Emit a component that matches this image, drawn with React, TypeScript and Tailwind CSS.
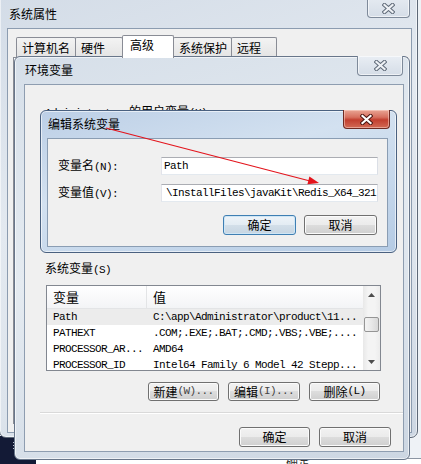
import React from "react";

const mono =
  "font-['Liberation_Mono','Noto_Sans_CJK_SC',monospace] text-[11px] tracking-[-0.6px]";
const btn =
  "flex items-center justify-center rounded-[3px] border border-[#707070] bg-[linear-gradient(#f2f2f2_0%,#ebebeb_49%,#dddddd_50%,#cfcfcf_100%)] shadow-[inset_0_0_0_1px_#fbfbfb] text-[12px] leading-none text-black";
const btnDefault =
  "flex items-center justify-center rounded-[3px] border border-[#3f7fb3] bg-[linear-gradient(#eef4f9_0%,#e3ecf3_49%,#d3dfe9_50%,#c6d5e2_100%)] shadow-[inset_0_0_0_1px_#cfe6f5] text-[12px] leading-none text-black";
const input =
  "bg-white border border-[#abadb3] border-l-[#e2e3ea] border-r-[#dbdfe6] border-b-[#e3e9ef] flex items-center overflow-hidden whitespace-nowrap";

function XGlyph({ red }: { red?: boolean }) {
  const d = "M2.5 2 L10.5 9 M10.5 2 L2.5 9";
  return (
    <svg width="13" height="11" viewBox="0 0 13 11">
      <path d={d} stroke={red ? "#4a1510" : "#5f6a78"} strokeWidth="4.2" strokeLinecap="square" />
      <path d={d} stroke={red ? "#ffffff" : "#eef1f5"} strokeWidth="2.2" strokeLinecap="square" />
    </svg>
  );
}

function Tab({ label, w, sel }: { label: string; w: number; sel?: boolean }) {
  if (sel) {
    return (
      <div
        style={{ width: w }}
        className="relative z-10 -ml-px mb-[-1px] h-[23px] bg-white border border-b-0 border-[#898c95] rounded-t-[2px] pl-[7px] pt-[1px] leading-[16px]"
      >
        {label}
      </div>
    );
  }
  return (
    <div
      style={{ width: w }}
      className="-ml-px first:ml-0 h-[20px] border border-b-0 border-[#898c95] rounded-t-[2px] bg-[linear-gradient(#f3f3f3,#e4e4e4)] pl-[5px] pt-[2px] leading-[16px]"
    >
      {label}
    </div>
  );
}

function OuterWindow() {
  return (
    <div className="absolute left-[-1px] top-[-8px] w-[419px] h-[446px] rounded-[7px] border border-[#5d6877] bg-[linear-gradient(160deg,#d3dce7_0%,#e3e9f0_40%,#dde4ec_70%,#cdd7e3_100%)] shadow-[inset_0_0_0_1px_rgba(255,255,255,0.55)] flex flex-col">
      <div className="relative h-[35px] shrink-0 pl-[9px] pt-[13px] leading-[16px]">
        系统属性
        <div className="absolute right-[7px] top-0 w-[43px] h-[25px] rounded-b-[4px] border border-t-0 border-[#7e8a9a] bg-[linear-gradient(#e9eef4,#d5dde7)] shadow-[inset_0_0_0_1px_rgba(255,255,255,0.6)] flex items-end justify-center pb-[3px]">
          <XGlyph />
        </div>
      </div>
      <div className="ml-[7px] mr-[5px] mb-[4px] flex-1 bg-[#f0f0f0] border border-[#8c9cb0] flex flex-col">
        <div className="pt-[6px] pl-[8px] flex items-end h-[28px]">
          <Tab label="计算机名" w={60} />
          <Tab label="硬件" w={48} />
          <Tab label="高级" w={52} sel />
          <Tab label="系统保护" w={59} />
          <Tab label="远程" w={46} />
        </div>
        <div className="ml-[5px] mr-[3px] mb-[8px] flex-1 bg-white border border-[#898c95]" />
      </div>
    </div>
  );
}

function EnvWindow() {
  return (
    <div className="absolute left-[14px] top-[56px] w-[396px] h-[404px] rounded-[6px] border border-[#68768a] bg-[linear-gradient(165deg,#d6dfe9_0%,#e5ebf1_45%,#d9e1ea_75%,#ccd6e2_100%)] shadow-[inset_0_0_0_1px_rgba(255,255,255,0.6)] flex flex-col">
      <div className="relative h-[27px] shrink-0 pl-[10px] pt-[5px] leading-[16px]">
        环境变量
        <div className="absolute right-[6px] top-[-1px] w-[46px] h-[20px] rounded-b-[4px] border border-t-0 border-[#7e8a9a] bg-[linear-gradient(#e9eef4,#d5dde7)] shadow-[inset_0_0_0_1px_rgba(255,255,255,0.6)] flex items-center justify-center">
          <XGlyph />
        </div>
      </div>
      <div className="ml-[9px] w-[380px] h-[368px] bg-[#f0f0f0] border border-[#8e9db0] flex flex-col">
        <div className="mt-[18px] ml-[20px] leading-[16px] whitespace-nowrap">
          <span className={mono}>Administrator </span>的用户变量<span className={mono}>(U)</span>
        </div>
        <div className="mt-[139px] ml-[20px] leading-[16px]">
          系统变量<span className={mono}>(S)</span>
        </div>
        <div className="ml-[21px] mt-[7px] w-[335px] h-[86px] bg-white border border-[#828790] flex overflow-hidden">
          <div className="flex-1 min-w-0 flex flex-col">
            <div className="h-[23px] shrink-0 flex border-b border-[#e3e4e6] bg-[linear-gradient(#ffffff,#f3f4f6)]">
              <div className="w-[100px] border-r border-[#e3e4e6] pl-[6px] flex items-center text-[13px]">变量</div>
              <div className="flex-1 pl-[6px] flex items-center text-[13px]">值</div>
            </div>
            {[
              ["Path", "C:\\app\\Administrator\\product\\11...", true],
              ["PATHEXT", ".COM;.EXE;.BAT;.CMD;.VBS;.VBE;....", false],
              ["PROCESSOR_AR...", "AMD64", false],
              ["PROCESSOR_ID", "Intel64 Family 6 Model 42 Stepp...", false],
            ].map(([k, v, s]) => (
              <div
                key={k as string}
                className={`h-[16px] shrink-0 flex items-center whitespace-nowrap ${s ? "bg-[#ececec]" : ""}`}
              >
                <div className={`w-[100px] pl-[6px] ${mono}`}>{k}</div>
                <div className={`flex-1 pl-[6px] ${mono}`}>{v}</div>
              </div>
            ))}
          </div>
          <div className="w-[17px] shrink-0 flex flex-col bg-[linear-gradient(90deg,#e8e8e8,#f4f4f4_30%,#f4f4f4_70%,#ececec)]">
            <div className="h-[17px] flex items-center justify-center">
              <svg width="7" height="4" viewBox="0 0 7 4">
                <path d="M0 4 L3.5 0 L7 4 Z" fill="#4d4d4d" />
              </svg>
            </div>
            <div className="flex-1">
              <div className="mt-[14px] mx-[1px] h-[15px] rounded-[2px] border border-[#959595] bg-[linear-gradient(90deg,#f3f3f3,#e8e8e8_50%,#d8d8d8)]" />
            </div>
            <div className="h-[17px] flex items-center justify-center">
              <svg width="7" height="4" viewBox="0 0 7 4">
                <path d="M0 0 L3.5 4 L7 0 Z" fill="#4d4d4d" />
              </svg>
            </div>
          </div>
        </div>
        <div className="mt-[11px] ml-[21px] w-[334px] flex justify-end gap-[9px]">
          <div className={`${btn} w-[71px] h-[19px]`}>
            新建<span className={`${mono} text-[#444]`}>(W)...</span>
          </div>
          <div className={`${btn} w-[72px] h-[19px]`}>
            编辑<span className={`${mono} text-[#444]`}>(I)...</span>
          </div>
          <div className={`${btn} w-[71px] h-[19px]`}>
            删除<span className={mono}>(L)</span>
          </div>
        </div>
        <div className="mt-[11px] ml-[15px] h-[2px] border-t border-[#d9d9d9] border-b border-b-white" />
        <div className="mt-[13px] mr-[12px] flex justify-end gap-[9px]">
          <div className={`${btn} w-[71px] h-[20px]`}>确定</div>
          <div className={`${btn} w-[72px] h-[20px]`}>取消</div>
        </div>
      </div>
    </div>
  );
}

function EditDialog() {
  return (
    <div className="absolute left-[40px] top-[110px] w-[357px] h-[143px] rounded-[6px] border border-[#4a6180] bg-[linear-gradient(165deg,#bccfe6_0%,#d3e1f0_40%,#c5d7eb_70%,#b5cbe4_100%)] shadow-[inset_0_0_0_1px_rgba(255,255,255,0.6)] flex flex-col">
      <div className="relative h-[27px] shrink-0 pl-[7px] pt-[5px] leading-[16px]">
        编辑系统变量
        <div className="absolute right-[6px] top-[-1px] w-[47px] h-[19px] rounded-b-[4px] border border-t-0 border-[#6e2a22] bg-[linear-gradient(#e9a594_0%,#d7705f_40%,#c23f2f_55%,#d26a55_100%)] shadow-[inset_0_0_0_1px_rgba(255,220,210,0.5)] flex items-center justify-center">
          <XGlyph red />
        </div>
      </div>
      <div className="ml-[6px] w-[341px] h-[109px] bg-[#f0f0f0] border border-[#8a9db3] flex flex-col">
        <div className="mt-[18px] flex items-center h-[18px]">
          <div className="ml-[10px] w-[103px] leading-[16px]">
            变量名<span className={mono}>(N):</span>
          </div>
          <div className={`${input} w-[217px] h-[18px] pl-[2px]`}>
            <span className={mono}>Path</span>
          </div>
        </div>
        <div className="mt-[9px] flex items-center h-[18px]">
          <div className="ml-[10px] w-[103px] leading-[16px]">
            变量值<span className={mono}>(V):</span>
          </div>
          <div className={`${input} w-[217px] h-[18px] pl-[4px]`}>
            <span className={mono}>\InstallFiles\javaKit\Redis_X64_321</span>
            <span className="ml-[1px] w-px h-[13px] bg-black" />
          </div>
        </div>
        <div className="mt-[13px] mr-[10px] flex justify-end gap-[8px]">
          <div className={`${btnDefault} w-[73px] h-[20px]`}>确定</div>
          <div className={`${btn} w-[73px] h-[20px]`}>取消</div>
        </div>
      </div>
    </div>
  );
}

export default function App() {
  return (
    <div className="relative w-[421px] h-[464px] overflow-hidden bg-[#eef2f6] font-['Noto_Sans_CJK_SC','Liberation_Sans',sans-serif] text-[12px] text-black">
      <div className="absolute left-0 top-[436px] w-[40px] h-[28px] bg-[#131a36]">
        <div className="ml-[13px] mt-[6px] w-[4px] flex flex-col gap-[2px]">
          <div className="h-px bg-[#b8c0d0]" />
          <div className="h-px bg-[#b8c0d0]" />
          <div className="h-px bg-[#b8c0d0]" />
        </div>
      </div>
      <div className="absolute left-[36px] top-[458px] w-[390px] h-[10px] bg-white border-t border-[#8c96a3] overflow-hidden">
        <div className="ml-[250px] -mt-[3px] leading-[12px] text-[#333]">确定</div>
      </div>
      <OuterWindow />
      <EnvWindow />
      <EditDialog />
      <svg className="absolute inset-0 pointer-events-none" width="421" height="464" viewBox="0 0 421 464">
        <line x1="106" y1="128" x2="310" y2="181" stroke="#e3141c" strokeWidth="1.2" />
        <polygon points="319,183 307.4,184.3 309.4,176.4" fill="#e3141c" />
      </svg>
    </div>
  );
}
